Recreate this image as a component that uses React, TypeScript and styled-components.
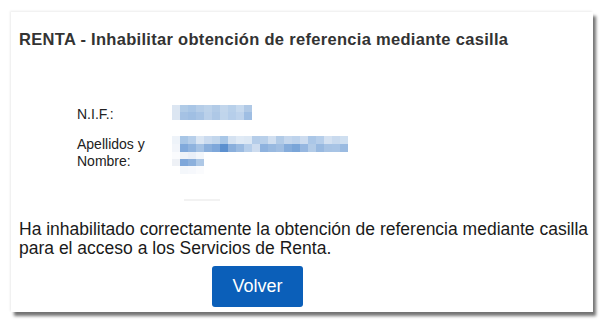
import React from "react";
import styled, { createGlobalStyle } from "styled-components";

const Global = createGlobalStyle`
  html, body { margin: 0; padding: 0; background: #ffffff; }
  body { font-family: "Liberation Sans", Arial, sans-serif; }
`;

const Page = styled.div`
  width: 606px;
  height: 324px;
  padding: 12px 0 0 11px;
  box-sizing: border-box;
`;

const Card = styled.div`
  width: 582px;
  height: 300px;
  box-sizing: border-box;
  background: #fff;
  padding: 17px 8px 0 8px;
  box-shadow: 3px 4px 3px rgba(0, 0, 0, 0.55), -1px -1px 2px rgba(0, 0, 0, 0.08);
  display: flex;
  flex-direction: column;
`;

const Title = styled.h1`
  margin: 0;
  font-size: 16.5px;
  letter-spacing: 0.3px;
  line-height: 20px;
  font-weight: bold;
  color: #333;
  white-space: nowrap;
`;

const Form = styled.div`
  margin: 56px 0 0 58px;
  display: grid;
  grid-template-columns: 95px auto;
  row-gap: 13px;
  color: #222;
  font-size: 14px;
`;

const Label = styled.div<{ $pt?: number }>`
  line-height: 17px;
  padding-top: ${(p) => p.$pt ?? 0}px;
`;

const Value = styled.div`
  display: flex;
  flex-direction: column;
`;

const Divider = styled.div`
  margin: 25px 0 0 165px;
  width: 36px;
  height: 2px;
  background: #f2f2f2;
`;

const Message = styled.p`
  margin: 19px 0 0 0;
  font-size: 17.5px;
  line-height: 19px;
  color: #1a1a1a;
  white-space: nowrap;
`;

const Button = styled.button`
  margin: 8px 0 0 193px;
  width: 91px;
  height: 41px;
  padding: 0;
  border: none;
  border-radius: 3px;
  background: #0b5fb9;
  color: #fff;
  font-family: "Liberation Sans", Arial, sans-serif;
  font-size: 18px;
  cursor: pointer;
`;

type Cell = [number, number, number, number, string];

const Mosaic: React.FC<{ w: number; h: number; cells: Cell[] }> = ({ w, h, cells }) => (
  <svg width={w} height={h} style={{ display: "block" }}>
    {cells.map(([x, y, cw, ch, c], i) => (
      <rect key={i} x={x} y={y} width={cw} height={ch} fill={c} />
    ))}
  </svg>
);

const nifCells: Cell[] = (() => {
  const cols = ["#dce6f2", "#b0cbe7", "#a9c6e6", "#b5cde8", "#bcd2ea", "#b2cbe7", "#c2d6ec", "#b8d0ea", "#c6d9ee", "#b0c9e6"];
  const cols2 = ["#dce6f2", "#a5c2e4", "#a0bfe3", "#a8c4e5", "#bad0ea", "#aec8e6", "#c0d5ec", "#b6ceea", "#bed3ec", "#9fbee3"];
  const out: Cell[] = [];
  for (let i = 0; i < 10; i++) {
    out.push([i * 8, 0, 8, 7, cols[i]]);
    out.push([i * 8, 7, 8, 8, cols2[i]]);
  }
  return out;
})();

const nameCells: Cell[] = (() => {
  const top = ["#eef3f9", "#a8c6e6", "#b7cfea", "#dbe6f3", "#cbdbef", "#c2d6ec", "#a9c7e7", "#d5e2f1", "#e0eaf5", "#dde8f4", "#b5cde9", "#b9d0ea", "#d1dff0", "#b2cbe7", "#c5d7ed", "#bed3ec", "#cddcef", "#abc7e7", "#b6ceea", "#d4e1f1", "#c9daee", "#cfdff0"];
  const bot = ["#f2f5fa", "#80a9db", "#8fb3de", "#a5c2e4", "#8aafdc", "#7ea7da", "#5c90cf", "#8aafdc", "#9bbbe1", "#b6ceea", "#cddcef", "#8eb2de", "#98b9e0", "#a0bee2", "#85acdb", "#7aa5d8", "#96b7e0", "#b2cbe7", "#98b9e0", "#a7c3e4", "#a8c4e5", "#9bbbe1"];
  const out: Cell[] = [];
  for (let i = 0; i < 22; i++) {
    out.push([i * 8, 0, 8, 8, top[i]]);
    out.push([i * 8, 8, 8, 8, bot[i]]);
  }
  return out;
})();

const name2Cells: Cell[] = [
  [0, 0, 8, 7, "#fafbfd"],
  [8, 0, 8, 7, "#eef3f9"],
  [16, 0, 8, 7, "#e9eff8"],
  [24, 0, 8, 7, "#f2f6fb"],
  [0, 7, 8, 7, "#eef1f6"],
  [8, 7, 8, 7, "#7ea7da"],
  [16, 7, 8, 7, "#8cb0dc"],
  [24, 7, 8, 7, "#aec8e6"],
  [8, 14, 8, 8, "#f4f7fb"],
  [16, 14, 8, 8, "#f6f8fc"],
  [24, 14, 8, 8, "#fafbfd"],
];

export default function App() {
  return (
    <>
      <Global />
      <Page>
        <Card>
          <Title>RENTA - Inhabilitar obtención de referencia mediante casilla</Title>
          <Form>
            <Label $pt={1}>N.I.F.:</Label>
            <Value>
              <Mosaic w={80} h={15} cells={nifCells} />
            </Value>
            <Label>
              Apellidos y
              <br />
              Nombre:
            </Label>
            <Value>
              <Mosaic w={176} h={16} cells={nameCells} />
              <Mosaic w={40} h={22} cells={name2Cells} />
            </Value>
          </Form>
          <Divider />
          <Message>
            Ha inhabilitado correctamente la obtención de referencia mediante casilla
            <br />
            para el acceso a los Servicios de Renta.
          </Message>
          <Button>Volver</Button>
        </Card>
      </Page>
    </>
  );
}
